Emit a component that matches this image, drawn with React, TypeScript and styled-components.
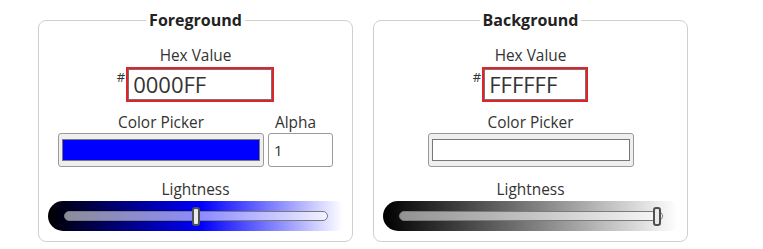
import React from "react";
import styled, { createGlobalStyle } from "styled-components";

const Global = createGlobalStyle`
  html, body { margin: 0; padding: 0; background: #fff; }
  body { font-family: "Open Sans", "Liberation Sans", sans-serif; color: #333; }
`;

const Page = styled.div`
  display: flex;
  gap: 20px;
  padding: 10px 0 0 38px;
`;

const Panel = styled.fieldset`
  box-sizing: border-box;
  width: 315px;
  margin: 0;
  padding: 0 0 10px;
  border: 1px solid #cfcfcf;
  border-radius: 8px;
  display: flex;
  flex-direction: column;
  align-items: center;
`;

const Legend = styled.legend`
  margin: 0 auto;
  padding: 0 3px;
  font-size: 16px;
  line-height: 20px;
  font-weight: 700;
  color: #222;
`;

const Label = styled.div<{ $top: number }>`
  font-size: 15.4px;
  line-height: 20px;
  color: #333;
  text-align: center;
  margin-top: ${(p) => p.$top}px;
`;

const HexRow = styled.div`
  display: flex;
  align-items: flex-start;
  margin-top: 1px;
`;

const Hash = styled.span`
  font-size: 13px;
  line-height: 13px;
  margin-top: 4px;
  padding-right: 1px;
  color: #333;
`;

const HexBox = styled.div<{ $w: number }>`
  box-sizing: border-box;
  width: ${(p) => p.$w}px;
  height: 35px;
  border: 2px solid #d8262c;
  box-shadow: inset 0 0 0 1px #8a6a6a;
  padding: 0 5px;
  font-size: 22px;
  line-height: 31px;
  color: #333;
`;

const PickerRow = styled.div`
  display: flex;
  gap: 4px;
  align-items: flex-end;
  margin-top: 11px;
`;

const Column = styled.div`
  display: flex;
  flex-direction: column;
  align-items: center;
`;

const ColorBox = styled.div`
  box-sizing: border-box;
  width: 206px;
  height: 34px;
  border: 1px solid #9a9a9a;
  border-radius: 3px;
  background: #efefef;
  padding: 5px 3px;
`;

const Swatch = styled.div<{ $c: string }>`
  height: 100%;
  border: 1px solid #777;
  background: ${(p) => p.$c};
  box-sizing: border-box;
`;

const AlphaLabel = styled.div`
  font-size: 15.4px;
  line-height: 20px;
  padding-right: 10px;
`;

const AlphaBox = styled.div`
  box-sizing: border-box;
  width: 65px;
  height: 34px;
  border: 1px solid #9a9a9a;
  border-radius: 3px;
  background: #fff;
  font-size: 15px;
  line-height: 32px;
  padding: 0 5px;
  color: #333;
`;

const Slider = styled.div<{ $hue: string }>`
  box-sizing: border-box;
  width: 295px;
  height: 30px;
  margin-top: 1px;
  border-radius: 15px 8px 8px 15px;
  background: linear-gradient(to right, #000 0%, ${(p) => p.$hue} 52%, #fff 100%);
  padding: 10px 15px 0 16px;
`;

const Track = styled.div`
  position: relative;
  box-sizing: border-box;
  height: 10px;
  border: 1px solid #7a7a7a;
  border-radius: 5px;
  background: rgba(255, 255, 255, 0.55);
`;

const Thumb = styled.div`
  position: absolute;
  top: -5px;
  width: 8px;
  height: 19px;
  box-sizing: border-box;
  border: 2px solid #505050;
  border-radius: 3px;
  background: #e9e9ee;
`;

type P = {
  title: string;
  hex: string;
  color: string;
  hue: string;
  hexWidth: number;
  alpha?: boolean;
  lightness: number;
};

const ColorPanel = ({ title, hex, color, hue, hexWidth, alpha, lightness }: P) => (
  <Panel>
    <Legend>{title}</Legend>
    <Label $top={16}>Hex Value</Label>
    <HexRow>
      <Hash>#</Hash>
      <HexBox $w={hexWidth}>{hex}</HexBox>
    </HexRow>
    <PickerRow>
      <Column>
        <Label $top={0}>Color Picker</Label>
        <ColorBox>
          <Swatch $c={color} />
        </ColorBox>
      </Column>
      {alpha && (
        <Column>
          <AlphaLabel>Alpha</AlphaLabel>
          <AlphaBox>1</AlphaBox>
        </Column>
      )}
    </PickerRow>
    <Label $top={13}>Lightness</Label>
    <Slider $hue={hue}>
      <Track>
        <Thumb style={{ left: `calc(${lightness * 100}% - ${lightness * 9}px)` }} />
      </Track>
    </Slider>
  </Panel>
);

export default function App() {
  return (
    <>
      <Global />
      <Page>
        <ColorPanel title="Foreground" hex="0000FF" color="#0000ff" hue="#0000ff" hexWidth={148} alpha lightness={0.5} />
        <ColorPanel title="Background" hex="FFFFFF" color="#ffffff" hue="#808080" hexWidth={106} lightness={1} />
      </Page>
    </>
  );
}
